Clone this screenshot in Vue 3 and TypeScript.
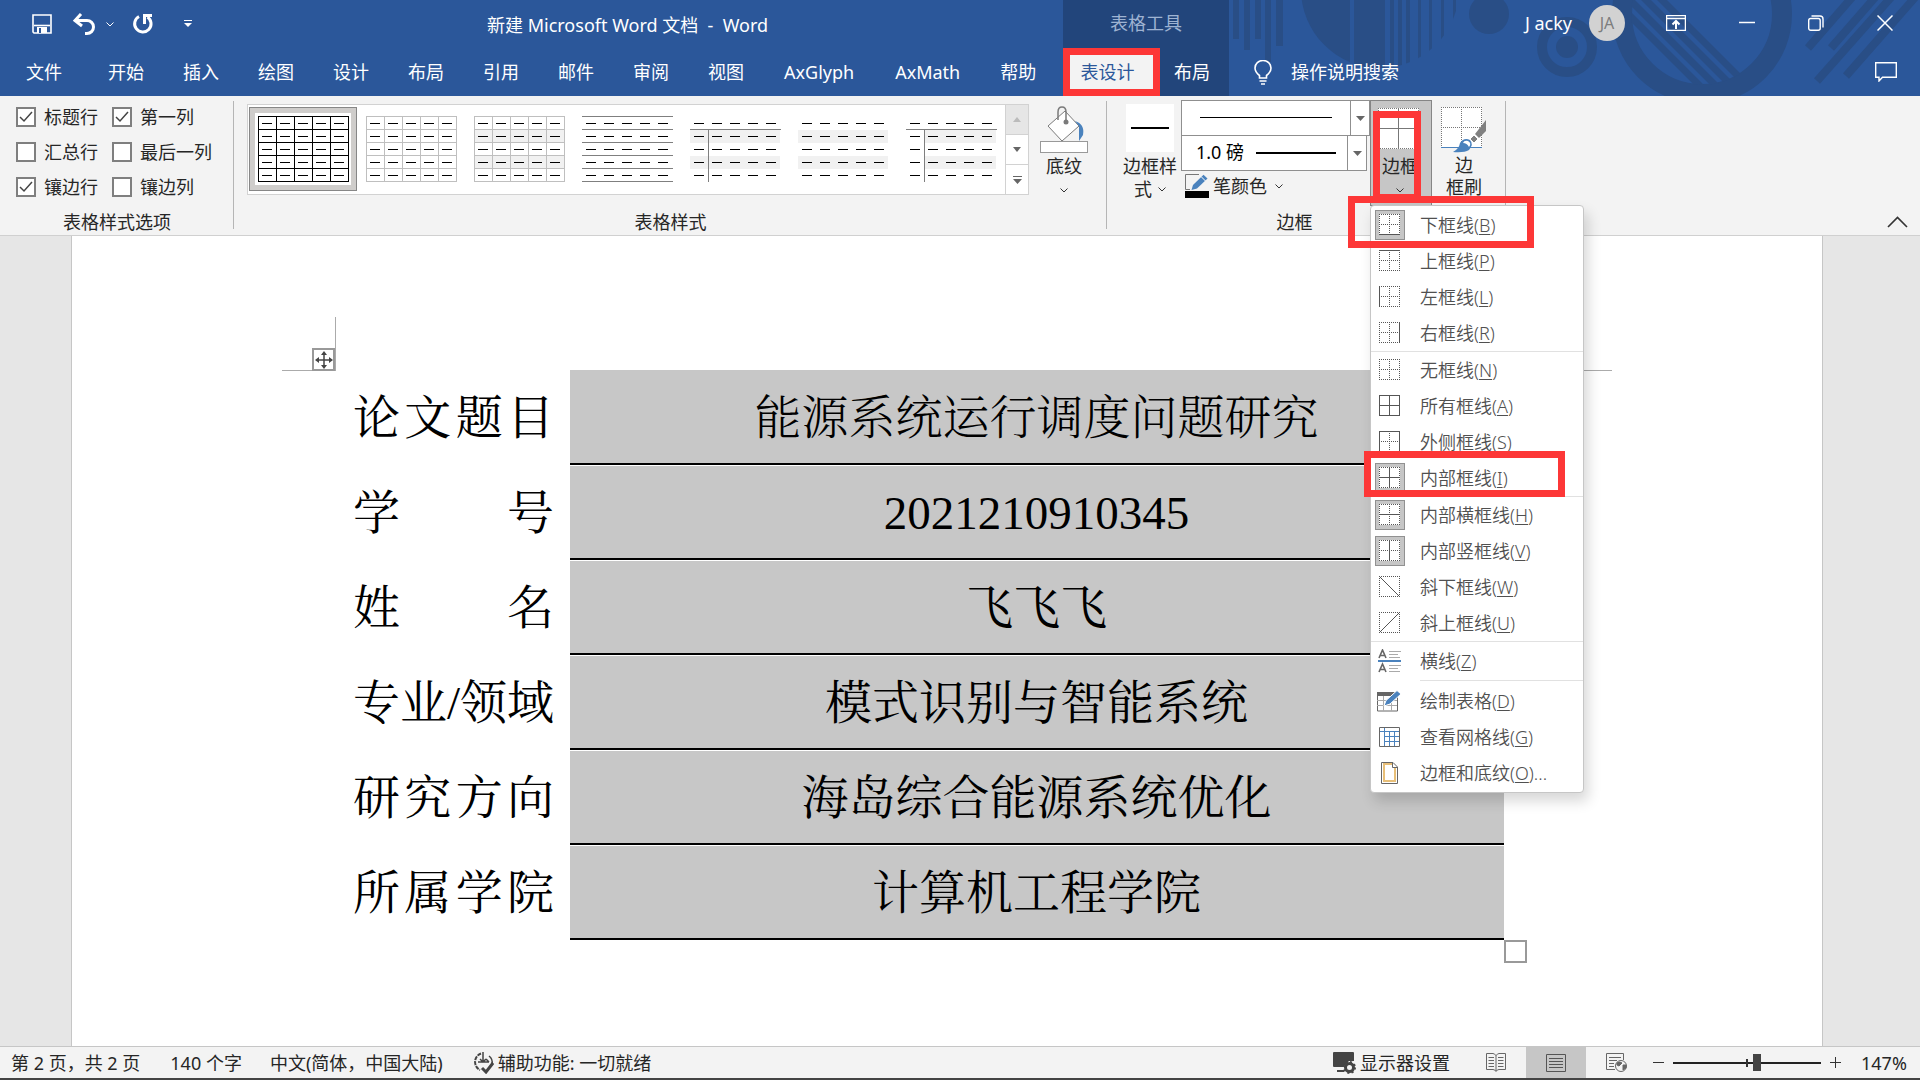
<script setup lang="ts">
import { ref } from 'vue'

interface MenuItem {
  label: string
  key: string
  tail?: string
  solid?: string
  outline?: boolean
  icon?: 'rule' | 'draw' | 'grid' | 'page'
  on?: boolean
  mark?: string
}

const tabs = ['文件', '开始', '插入', '绘图', '设计', '布局', '引用', '邮件', '审阅', '视图', 'AxGlyph', 'AxMath', '帮助']

const options = ref([
  { label: '标题行', checked: true },
  { label: '第一列', checked: true },
  { label: '汇总行', checked: false },
  { label: '最后一列', checked: false },
  { label: '镶边行', checked: true },
  { label: '镶边列', checked: false },
])

const styles = [
  { name: '网格型', stroke: '#000', rows: [0, 1, 2, 3, 4, 5], cols: [0, 1, 2, 3, 4, 5], band: 0 },
  { name: '网格型浅色', stroke: '#bfbfbf', rows: [0, 1, 2, 3, 4, 5], cols: [0, 1, 2, 3, 4, 5], band: 0 },
  { name: '普通表格 1', stroke: '#bfbfbf', rows: [0, 1, 2, 3, 4, 5], cols: [0, 1, 2, 3, 4, 5], band: 90 },
  { name: '普通表格 2', stroke: '#7f7f7f', rows: [0, 1, 2, 3, 4, 5], cols: [], band: 0 },
  { name: '普通表格 3', stroke: '#7f7f7f', rows: [1], cols: [1], band: 90 },
  { name: '普通表格 4', stroke: '#7f7f7f', rows: [], cols: [], band: 90 },
  { name: '普通表格 5', stroke: '#7f7f7f', rows: [1], cols: [1], band: 72 },
]

const sections: MenuItem[][] = [
  [
    { label: '下框线', key: 'B', solid: 'b', on: true, mark: 'mark-first' },
    { label: '上框线', key: 'P', solid: 't' },
    { label: '左框线', key: 'L', solid: 'l' },
    { label: '右框线', key: 'R', solid: 'r' },
  ],
  [
    { label: '无框线', key: 'N', solid: '' },
    { label: '所有框线', key: 'A', solid: 'tblrhv' },
    { label: '外侧框线', key: 'S', solid: 'tblr' },
    { label: '内部框线', key: 'I', solid: 'hv', on: true, mark: 'mark-inner' },
  ],
  [
    { label: '内部横框线', key: 'H', solid: 'h', on: true },
    { label: '内部竖框线', key: 'V', solid: 'v', on: true },
    { label: '斜下框线', key: 'W', solid: 'd', outline: true },
    { label: '斜上框线', key: 'U', solid: 'u', outline: true },
  ],
  [{ label: '横线', key: 'Z', icon: 'rule' }],
  [
    { label: '绘制表格', key: 'D', icon: 'draw' },
    { label: '查看网格线', key: 'G', icon: 'grid' },
    { label: '边框和底纹', key: 'O', tail: '...', icon: 'page' },
  ],
]

const edges: Record<string, string> = {
  t: 'M0 .5H21',
  b: 'M0 20.5H21',
  l: 'M.5 0V21',
  r: 'M20.5 0V21',
  h: 'M0 10.5H21',
  v: 'M10.5 0V21',
  d: 'M1 1L20 20',
  u: 'M1 20L20 1',
}

function dotted(item: MenuItem): string {
  const all = item.outline ? 'tblr' : 'tblrhv'
  return [...all].filter((e) => !item.solid?.includes(e)).map((e) => edges[e]).join('')
}
function solid(item: MenuItem): string {
  return [...(item.solid ?? '')].map((e) => edges[e]).join('')
}

const rows = [
  ['论文题目', '能源系统运行调度问题研究'],
  ['学号', '2021210910345'],
  ['姓名', '飞飞飞'],
  ['专业/领域', '模式识别与智能系统'],
  ['研究方向', '海岛综合能源系统优化'],
  ['所属学院', '计算机工程学院'],
]

const zoom = ref(57)
</script>

<template>
  <div class="app">
    <header class="header">
      <svg class="decor" width="691" height="96" viewBox="1229 0 691 96" aria-hidden="true">
        <defs>
          <clipPath id="disc"><circle cx="1380" cy="-11" r="79" /></clipPath>
          <clipPath id="hole"><circle cx="1702" cy="14" r="71" /></clipPath>
        </defs>
        <g fill="#294e86">
          <path d="M1233 0h6v39h-6zM1244 0h6v50h-6zM1255 0h6v39h-6zM1265 0h6v62h-6zM1276 0h7v46h-7z" />
          <path clip-path="url(#disc)" d="M1300 0h50v70h-18V52h-30zM1354 0h31v70h-31zM1390 0h4v70h-4zM1398 0h4v70h-4zM1406 0h4v70h-4zM1418 0h3v70h-3zM1429 0h3v70h-3zM1441 0h3v70h-3zM1453 0h3v70h-3z" />
          <circle cx="1489" cy="14" r="20" />
        </g>
        <g fill="none" stroke="#294e86">
          <circle cx="1567" cy="47" r="25" stroke-width="10" />
          <circle cx="1702" cy="14" r="80" stroke-width="20" />
          <path clip-path="url(#hole)" stroke-width="7" d="M1600 -14L1720 106M1616 -14L1736 106M1632 -14L1752 106M1648 -14L1768 106" />
          <path stroke-width="8" d="M1808 48L1855 -6M1831 48L1878 -6M1817 81L1894 -6M1846 76L1918 -6" />
        </g>
        <circle cx="1567" cy="47" r="11" fill="#294e86" />
      </svg>

      <div class="titlebar">
        <div class="quick">
          <button class="bare" aria-label="保存">
            <svg width="20" height="20" viewBox="0 0 20 20"><path d="M1 1H19V19H2L1 18Z" fill="none" stroke="#fff" stroke-width="1.600" /><path d="M2 11.500H18" stroke="#fff" stroke-width="1.600" /><path d="M5 13H15V19H5Z" fill="#fff" /><path d="M7 14H9V19H7Z" fill="#2b579a" /></svg>
          </button>
          <button class="bare undo" aria-label="撤消">
            <svg width="24" height="22" viewBox="0 0 24 22"><path d="M9 1L3 7.500L10 13M3 7.500H15A6.500 6.500 0 0 1 15 20.500H13" fill="none" stroke="#fff" stroke-width="3" /></svg>
          </button>
          <button class="bare" aria-label="撤消列表">
            <svg width="8" height="5" viewBox="0 0 8 5"><path d="M.5 .5L4 4L7.500 .5" fill="none" stroke="#fff" /></svg>
          </button>
          <button class="bare redo" aria-label="重复">
            <svg width="22" height="22" viewBox="0 0 22 22"><path d="M7 3.500A8.200 8.200 0 1 0 15.500 4" fill="none" stroke="#fff" stroke-width="3" /><path d="M11 1H20V4H14V11H11Z" fill="#fff" /></svg>
          </button>
          <button class="bare more" aria-label="自定义快速访问工具栏">
            <svg width="8" height="8" viewBox="0 0 8 8"><path d="M0 0H8V1H0ZM0 3H8L4 7Z" fill="#fff" /></svg>
          </button>
        </div>
        <h1 class="title">新建 Microsoft Word 文档&nbsp; -&nbsp; Word</h1>
        <div class="tools-title">表格工具</div>
        <div class="account">
          <span>J acky</span>
          <span class="avatar">JA</span>
          <button class="bare" aria-label="功能区显示选项">
            <svg width="20" height="16" viewBox="0 0 20 16"><path d="M.5 .5H19.500V15.500H.5ZM0 3.500H20" fill="none" stroke="#fff" stroke-width="1.500" /><path d="M10 14V6M6.500 9.500L10 6L13.500 9.500" fill="none" stroke="#fff" stroke-width="2" /></svg>
          </button>
          <button class="bare" aria-label="最小化">
            <svg width="16" height="16" viewBox="0 0 16 16"><path d="M0 7.500H16" stroke="#fff" stroke-width="1.500" /></svg>
          </button>
          <button class="bare" aria-label="还原">
            <svg width="16" height="16" viewBox="0 0 16 16"><rect x=".7" y="3.500" width="11.500" height="11.800" rx="2" fill="none" stroke="#fff" stroke-width="1.400" /><path d="M3.500 1H12Q15 1 15 4V12.500" fill="none" stroke="#fff" stroke-width="1.400" /></svg>
          </button>
          <button class="bare" aria-label="关闭">
            <svg width="16" height="16" viewBox="0 0 16 16"><path d="M.5 .5L15.500 15.500M15.500 .5L.5 15.500" stroke="#fff" stroke-width="1.500" /></svg>
          </button>
        </div>
      </div>

      <nav class="tabs">
        <div class="main-tabs">
          <button v-for="t in tabs" :key="t" class="tab" :class="{ addin: t.startsWith('Ax') }">{{ t }}</button>
        </div>
        <div class="tool-tabs">
          <button class="tab tab-active">表设计</button>
          <button class="tab tab-tool">布局</button>
        </div>
        <button class="tab tell">
          <svg width="18" height="25" viewBox="0 0 18 25"><path d="M5.500 18V15.500Q1 12 1 8A8 7.500 0 0 1 17 8Q17 12 12.500 15.500V18ZM5.500 21H12.500M7 24H11" fill="none" stroke="#fff" stroke-width="1.600" /></svg>
          操作说明搜索
        </button>
        <button class="bare comment" aria-label="批注">
          <svg width="22" height="20" viewBox="0 0 22 20"><path d="M.7 .7H21.300V15.300H7.500L4 19V15.300H.7Z" fill="none" stroke="#fff" stroke-width="1.400" /></svg>
        </button>
      </nav>
    </header>

    <section class="ribbon">
      <div class="group group-options">
        <div class="body checks">
          <label v-for="o in options" :key="o.label" class="check"><input v-model="o.checked" type="checkbox" />{{ o.label }}</label>
        </div>
        <div class="caption">表格样式选项</div>
      </div>

      <div class="group group-styles">
        <div class="body">
          <div class="gallery">
            <button v-for="(s, i) in styles" :key="s.name" class="style" :class="{ chosen: i === 0 }" :aria-label="s.name">
              <svg width="91" height="66" viewBox="0 0 91 66" shape-rendering="crispEdges">
                <path v-if="s.band" :d="`M${90 - s.band} 13.500H90V26.500H${90 - s.band}ZM${90 - s.band} 39.500H90V52.500H${90 - s.band}Z`" fill="#f1f1f1" />
                <path v-for="r in s.rows" :key="'r' + r" :d="`M0 ${r * 13 + 0.5}H91`" :stroke="s.stroke" />
                <path v-for="c in s.cols" :key="'c' + c" :d="`M${c * 18 + 0.5} ${s.cols.length === 1 ? 13 : 0}V66`" :stroke="s.stroke" />
                <path d="M4 7.500H90M4 20.500H90M4 33.500H90M4 46.500H90M4 59.500H90" stroke="#000" stroke-dasharray="10 8" />
              </svg>
            </button>
            <div class="scroller">
              <button class="scroll dim" aria-label="上一行"><svg width="8" height="5"><path d="M0 5H8L4 0Z" fill="#bbb" /></svg></button>
              <button class="scroll" aria-label="下一行"><svg width="8" height="5"><path d="M0 0H8L4 5Z" fill="#666" /></svg></button>
              <button class="scroll" aria-label="其他"><svg width="9" height="8"><path d="M0 0H9V1H0ZM0 3H9L4.500 8Z" fill="#666" /></svg></button>
            </div>
          </div>
          <button class="big shading">
            <svg width="48" height="48" viewBox="0 0 48 48"><path d="M25 5L39 20L22 35L8 20Z" fill="#fff" stroke="#7a7a7a" /><path d="M18 14V6Q18 1 22 1Q26 1 26 6V16" fill="none" stroke="#7a7a7a" stroke-width="1.500" /><circle cx="26" cy="16" r="2.500" fill="#7a7a7a" /><path d="M35 15Q45 18 43 29L39 35V20Z" fill="#4a82bd" /><rect x=".5" y="35.500" width="47" height="11" fill="#fff" stroke="#999" /></svg>
            <span>底纹</span>
            <svg class="chev" width="8" height="5" viewBox="0 0 8 5"><path d="M.5 .5L4 4L7.500 .5" /></svg>
          </button>
        </div>
        <div class="caption">表格样式</div>
      </div>

      <div class="group group-borders">
        <div class="body">
          <button class="big border-style">
            <svg width="48" height="48"><path d="M0 0H48V48H0Z" fill="#fff" /><path d="M5 24H43" stroke="#000" stroke-width="2" /></svg>
            <span>边框样</span>
            <span class="second">式 <svg class="chev" width="8" height="5" viewBox="0 0 8 5"><path d="M.5 .5L4 4L7.500 .5" /></svg></span>
          </button>
          <div class="pen">
            <div class="combo">
              <select aria-label="笔样式"><option></option></select>
              <svg class="stroke thin" width="132" height="1"><path d="M0 .5H132" stroke="#000" /></svg>
              <span class="drop"><svg width="9" height="5"><path d="M0 0H9L4.500 5Z" fill="#666" /></svg></span>
            </div>
            <div class="combo weight">
              <select aria-label="笔划粗细"><option>1.0 磅</option></select>
              <svg class="stroke" width="80" height="2"><path d="M0 1H80" stroke="#000" stroke-width="2" /></svg>
              <span class="drop"><svg width="9" height="5"><path d="M0 0H9L4.500 5Z" fill="#666" /></svg></span>
            </div>
            <button class="pen-color">
              <svg width="24" height="24" viewBox="0 0 24 24"><path d="M14 .5H.5V15.500H5" fill="none" stroke="#777" /><path d="M6.500 16L8 11L18.500 .8L22.500 4.500L12 14.500Z" fill="#4a82bd" /><path d="M16 2.500L20.500 7" stroke="#fff" /><path d="M0 17H24V24H0Z" /></svg>
              笔颜色
              <svg class="chev" width="8" height="5" viewBox="0 0 8 5"><path d="M.5 .5L4 4L7.500 .5" /></svg>
            </button>
          </div>
          <div class="borders">
            <button class="big borders-button">
              <svg width="41" height="41" viewBox="0 0 41 41" shape-rendering="crispEdges"><path d="M0 0H41V41H0Z" fill="#fff" /><path d="M0 .5H41M0 40.500H41M.5 0V41M40.500 0V41" stroke="#777" stroke-dasharray="1 1" /><path d="M0 20.500H41M20.500 0V41" stroke="#777" /></svg>
              <span>边框</span>
              <svg class="chev" width="8" height="5" viewBox="0 0 8 5"><path d="M.5 .5L4 4L7.500 .5" /></svg>
            </button>
            <i class="mark mark-borders"></i>
            <div class="menu" role="menu">
              <div v-for="(section, i) in sections" :key="i" class="section" :class="'section-' + i">
                <button v-for="item in section" :key="item.key" class="item" role="menuitem">
                  <span class="glyph" :class="{ on: item.on }">
                    <svg v-if="!item.icon" width="21" height="21" viewBox="0 0 21 21" fill="none">
                      <path d="M0 0H21V21H0Z" fill="#fff" />
                      <path :d="dotted(item)" stroke="#555" stroke-dasharray="1 1" shape-rendering="crispEdges" />
                      <path :d="solid(item)" stroke="#555" />
                    </svg>
                    <svg v-else-if="item.icon === 'rule'" width="23" height="24" viewBox="0 0 23 24" fill="none">
                      <path d="M1 9L4.500 1L8 9M2.500 6.500H6.500M1 23L4.500 15L8 23M2.500 20.500H6.500" stroke="#666" stroke-width="1.600" />
                      <path d="M11 2.500H23M11 5.500H20M11 8.500H22M11 16.500H23M11 19.500H20M11 22.500H22" stroke="#aaa" />
                      <path d="M0 12H23" stroke="#4a82bd" stroke-width="2" />
                    </svg>
                    <svg v-else-if="item.icon === 'draw'" width="25" height="23" viewBox="0 0 25 23" fill="none">
                      <path d="M.5 3.500H20.500V22H.5Z" stroke="#666" fill="#fff" /><path d="M0 3H18L15 7H0Z" fill="#666" />
                      <path d="M0 11.500H20M0 16.500H20M6.500 7V22M14.500 7V22" stroke="#aaa" />
                      <path d="M7 17L9 11.500L20 1.500L24 5L13 15Z" fill="#4a82bd" stroke="#fff" />
                    </svg>
                    <svg v-else-if="item.icon === 'grid'" width="21" height="20" viewBox="0 0 21 20" fill="none">
                      <path d="M1 4.500H20M5 9.500H20M5 14.500H20M5.500 1V19M10.500 4V19M15.500 4V19" stroke="#4a82bd" />
                      <path d="M.5 .5H20.500V19.500H.5Z" stroke="#666" />
                    </svg>
                    <svg v-else width="17" height="22" viewBox="0 0 17 22" fill="none">
                      <path d="M.5 .5H12L16.500 5V21.500H.5Z" stroke="#666" /><path d="M12 2H3V19H14V6" stroke="#e8bf78" stroke-width="2" /><path d="M11.500 .5V5.500H16.500" stroke="#666" />
                    </svg>
                  </span>
                  <span>{{ item.label }}(<u>{{ item.key }}</u>){{ item.tail }}</span>
                  <i v-if="item.mark" class="mark" :class="item.mark"></i>
                </button>
              </div>
            </div>
          </div>
          <button class="big painter">
            <svg width="46" height="46" viewBox="0 0 46 46"><path d="M0 0H41V41H0Z" fill="#fff" /><path d="M0 .5H41M0 20.500H41M.5 0V40M20.500 0V40M40.500 0V40" stroke="#777" stroke-dasharray="1 1" shape-rendering="crispEdges" /><path d="M0 40.500H41" stroke="#4a82bd" /><path d="M45 13V24L38 31L34 27Z" fill="#808080" /><path d="M33 28L37 32L33 36L29 32Z" fill="#808080" stroke="#fff" /><path d="M12 45Q18 42 19 36Q23 30 29 33Q33 37 28 43Q23 46 12 45Z" fill="#4a82bd" /><path d="M22 36Q23 33 27 34Q31 36 28 40Q26 36 22 36Z" fill="#fff" /></svg>
            <span>边</span>
            <span class="second">框刷</span>
          </button>
        </div>
        <div class="caption">边框</div>
      </div>
      <button class="bare collapse" aria-label="折叠功能区">
        <svg width="21" height="12" viewBox="0 0 21 12"><path d="M1 11L10.500 1.500L20 11" fill="none" stroke="#333" stroke-width="1.600" /></svg>
      </button>
    </section>

    <main class="workspace">
      <article class="page">
        <div class="crop">
          <button class="handle" aria-label="移动表格">
            <svg width="18" height="18" viewBox="0 0 18 18"><path d="M9 2V16M2 9H16" stroke="#444" stroke-width="1.500" /><path d="M9 0L12 4H6ZM9 18L12 14H6ZM0 9L4 6V12ZM18 9L14 6V12Z" fill="#444" /></svg>
          </button>
          <span class="crop-right"></span>
        </div>
        <div class="sheet">
          <table>
            <tbody>
              <tr v-for="r in rows" :key="r[0]">
                <th scope="row">{{ r[0] }}</th>
                <td>{{ r[1] }}</td>
              </tr>
            </tbody>
          </table>
          <i class="resize"></i>
        </div>
      </article>
    </main>

    <footer class="status">
      <span class="pages">第 2 页，共 2 页</span>
      <span class="words">140 个字</span>
      <span class="lang">中文(简体，中国大陆)</span>
      <button class="bare access">
        <svg width="21" height="22" viewBox="0 0 21 22" fill="none" stroke="#444"><path d="M8 1.500A9 9 0 0 0 7 18" stroke-width="2" stroke-dasharray="4 1" /><path d="M10 0V10M7 7L10 10L13 7M5 10H16M13 7L16 10" stroke-width="1.500" /><path d="M16 4Q20 7 19 12" stroke-width="1.500" /><path d="M9 16L13 20L20 11" stroke-width="3" /></svg>
        辅助功能: 一切就绪
      </button>
      <button class="bare display">
        <svg width="23" height="22" viewBox="0 0 23 22"><path d="M1 0H20Q21 0 21 1V9H16L10 15H1Q0 15 0 14V1Q0 0 1 0ZM4 18H11V20H4Z" fill="#444" /><circle cx="16.500" cy="15.500" r="4" fill="none" stroke="#444" stroke-width="3" /><circle cx="16.500" cy="15.500" r="5.500" fill="none" stroke="#444" stroke-width="2" stroke-dasharray="2 2.300" /></svg>
        显示器设置
      </button>
      <button class="view" aria-label="阅读视图">
        <svg width="20" height="19" viewBox="0 0 20 19" fill="none" stroke="#666"><path d="M10 2.500Q8 .5 7 .5H.5V16.500H7Q9 16.500 10 18.500Q11 16.500 13 16.500H19.500V.5H13Q12 .5 10 2.500V18" /><path d="M2.500 4.500H8M2.500 7.500H8M2.500 10.500H8M2.500 13.500H8M12 4.500H17.500M12 7.500H17.500M12 10.500H17.500M12 13.500H17.500" /></svg>
      </button>
      <button class="view view-on" aria-label="页面视图">
        <svg width="20" height="18" viewBox="0 0 20 18" fill="none" stroke="#555"><path d="M.5 .5H19.500V17.500H.5ZM3 4.500H17M3 7.500H17M3 10.500H17M3 13.500H17" /></svg>
      </button>
      <button class="view" aria-label="Web 版式视图">
        <svg width="21" height="19" viewBox="0 0 21 19" fill="none" stroke="#666"><path d="M9 16.500H.5V.5H17.500V7M3 4.500H15M3 7.500H11M3 10.500H8M3 13.500H8" /><circle cx="15" cy="13" r="5.500" fill="#f3f3f3" /><path d="M11 10Q14 8 16 10L13 13L11 12ZM17 12H20V15L17 17Z" fill="#666" /></svg>
      </button>
      <button class="bare minus" aria-label="缩小"><svg width="11" height="11"><path d="M0 5.500H11" stroke="#333" /></svg></button>
      <input v-model="zoom" class="zoom" type="range" min="0" max="100" aria-label="显示比例" />
      <button class="bare plus" aria-label="放大"><svg width="11" height="11"><path d="M0 5.500H11M5.500 0V11" stroke="#333" /></svg></button>
      <span class="percent">147%</span>
    </footer>
  </div>
</template>

<style>
body {
  margin: 0;
}
</style>

<style scoped>
.app {
  display: flex;
  flex-direction: column;
  min-height: 100vh;
  box-sizing: border-box;
  border-bottom: 2px solid #444;
  font: 18px/24px "Noto Sans", "Noto Sans CJK SC", sans-serif;
  color: #262626;
  background: #e6e6e6;
}
* {
  box-sizing: border-box;
}
button,
select {
  font: inherit;
  color: inherit;
  padding: 0;
  border: 0;
  background: none;
  white-space: nowrap;
}
svg {
  display: block;
  flex: none;
}
.bare {
  display: flex;
  align-items: center;
}
.chev {
  fill: none;
  stroke: #333;
}

/* Title bar and tabs */
.header {
  position: relative;
  background: #2b579a;
  color: #fff;
}
.decor {
  position: absolute;
  top: 0;
  right: 0;
}
.titlebar,
.tabs {
  position: relative;
  display: flex;
  height: 48px;
}
.quick {
  display: flex;
  align-items: center;
  width: 487px;
  padding-left: 32px;
}
.undo {
  margin: 0 10px 0 20px;
}
.redo {
  margin: 0 30px 0 18px;
}
.title {
  width: 576px;
  margin: 0;
  font-size: 18px;
  font-weight: 400;
  line-height: 50px;
  white-space: nowrap;
}
.tools-title {
  width: 166px;
  background: #22457b;
  color: #9eb3d2;
  line-height: 46px;
  text-align: center;
}
.account {
  display: flex;
  align-items: center;
  height: 46px;
  margin-left: auto;
  padding-right: 27px;
  gap: 53px;
}
.avatar {
  width: 36px;
  height: 36px;
  margin: 0 -12px 0 -36px;
  border-radius: 50%;
  background: #d2d2d2;
  color: #7d7d7d;
  font-size: 16px;
  line-height: 36px;
  text-align: center;
}
.tabs {
  align-items: stretch;
}
.main-tabs {
  display: flex;
  width: 1063px;
  padding-left: 26px;
  gap: 39px;
}
.main-tabs .tab:first-child {
  margin-right: 7px;
}
.main-tabs .addin {
  padding: 0 1px;
}
.tool-tabs {
  display: flex;
  width: 166px;
  background: #22457b;
}
.tab-active {
  width: 97px;
  padding-right: 8px;
  border: 7px solid #fd3737;
  background: #f3f3f3;
  color: #2b579a;
}
.tab-tool {
  padding-left: 14px;
}
.tell {
  display: flex;
  align-items: center;
  gap: 19px;
  padding-left: 25px;
}
.comment {
  margin-left: auto;
  padding-right: 23px;
}

/* Ribbon */
.ribbon {
  display: flex;
  height: 140px;
  border-bottom: 1px solid #d0d0d0;
  background: #f3f3f3;
}
.group {
  position: relative;
}
.group::after {
  content: "";
  position: absolute;
  top: 5px;
  right: 0;
  width: 1px;
  height: 128px;
  background: #b5b5b5;
}
.body {
  display: flex;
  height: 114px;
}
.caption {
  text-align: center;
}
.group-options {
  width: 234px;
}
.group-borders .caption {
  padding-right: 24px;
}
.checks {
  display: grid;
  grid-template-columns: 96px auto;
  grid-auto-rows: 35px;
  padding: 3px 0 0 16px;
}
.check {
  display: flex;
  align-items: center;
  gap: 8px;
  white-space: nowrap;
}
.check input {
  appearance: none;
  width: 20px;
  height: 20px;
  margin: 0;
  border: 2px solid #7f7f7f;
  background: #fff;
}
.check input:checked {
  background: #fff url("data:image/svg+xml,%3Csvg xmlns='http://www.w3.org/2000/svg' viewBox='0 0 16 16'%3E%3Cpath d='M2 8L6 12L14 3' fill='none' stroke='%23444' stroke-width='1.500'/%3E%3C/svg%3E");
}
.group-styles {
  width: 873px;
}
.gallery {
  display: flex;
  height: 91px;
  margin: 8px 0 0 13px;
  border: 1px solid #d2d2d2;
  background: #fff;
}
.style {
  display: flex;
  align-items: center;
  justify-content: center;
  width: 108px;
  height: 84px;
  margin: 2px 0 0 1px;
}
.style + .style {
  margin-left: 0;
}
.chosen {
  border: 1px solid #878787;
  background: #fff;
  box-shadow: inset 0 0 0 5px #cfcdcb;
}
.scroller {
  display: flex;
  flex-direction: column;
  width: 23px;
  border-left: 1px solid #d2d2d2;
}
.scroll {
  display: flex;
  flex: 1;
  align-items: center;
  justify-content: center;
}
.scroll + .scroll {
  border-top: 1px solid #d2d2d2;
}
.dim {
  background: #e6e6e6;
}
.big {
  display: flex;
  flex-direction: column;
  align-items: center;
}
.big > span {
  line-height: 24px;
}
.shading {
  width: 50px;
  margin: 10px 0 0 10px;
}
.big > .chev {
  margin-top: 10px;
}
.group-borders {
  width: 399px;
}
.border-style {
  width: 56px;
  margin: 8px 0 0 15px;
}
.border-style > span {
  margin-top: 2px;
}
.big > .second {
  display: flex;
  align-items: center;
  gap: 6px;
  margin-top: -1px;
}
.pen {
  width: 189px;
  margin: 4px 0 0 3px;
}
.combo {
  position: relative;
  display: flex;
  height: 36px;
  border: 1px solid #8f8f8f;
  background: #fff;
}
.weight {
  width: 186px;
  margin-top: -1px;
}
.combo select {
  appearance: none;
  flex: 1;
  padding: 0 0 2px 14px;
  color: #000;
}
.drop {
  display: flex;
  align-items: center;
  justify-content: center;
  width: 19px;
  border-left: 1px solid #8f8f8f;
}
.stroke {
  position: absolute;
  top: 16px;
  right: 30px;
}
.thin {
  right: 37px;
}
.pen-color {
  display: flex;
  align-items: center;
  height: 30px;
  padding-left: 4px;
  gap: 4px;
}
.pen-color .chev {
  margin-left: 4px;
}
.borders {
  position: relative;
}
.borders-button {
  width: 62px;
  height: 106px;
  margin-top: 4px;
  padding: 7px 6px 0 0;
  border: 1px solid #858585;
  background: #c6c6c6;
}
.borders-button span {
  margin: 5px 0 0 4px;
}
.borders-button .chev {
  margin-left: 4px;
}
.painter {
  width: 46px;
  margin: 11px 0 0 10px;
  padding-right: 2px;
}
.painter .second {
  margin-top: -2px;
}
.collapse {
  align-self: flex-end;
  margin: 0 12px 7px auto;
}

/* Red call-outs */
.mark {
  position: absolute;
  border: 7px solid #fd3737;
  pointer-events: none;
}
.mark-borders {
  top: 15px;
  left: 3px;
  width: 48px;
  height: 90px;
}
.mark-first {
  top: -11px;
  left: -23px;
  width: 186px;
  height: 52px;
}
.mark-inner {
  top: -9px;
  left: -7px;
  width: 201px;
  height: 46px;
}

/* Borders menu */
.menu {
  position: absolute;
  z-index: 2;
  top: 109px;
  left: 0;
  width: 214px;
  padding: 1px 0;
  border: 1px solid #c6c6c6;
  border-radius: 4px;
  background: #fff;
  box-shadow: 4px 8px 14px rgba(0, 0, 0, 0.16);
  color: #505050;
  font-weight: 350;
}
.section + .section {
  border-top: 1px solid #e1e1e1;
}
.section-3 {
  padding: 1px 0;
}
.section.section-4 {
  margin-left: 49px;
  padding-top: 2px;
}
.section-4 .item {
  width: 212px;
  margin-left: -49px;
}
.item {
  position: relative;
  display: flex;
  align-items: center;
  width: 100%;
  height: 36px;
  padding-left: 4px;
  gap: 15px;
}
.item u {
  text-underline-offset: 2px;
  text-decoration-thickness: 1px;
}
.glyph {
  display: flex;
  align-items: center;
  justify-content: center;
  width: 30px;
  height: 30px;
  padding: 0 1px 1px 0;
}
.on {
  border: 1px solid #919191;
  background: #c6c6c6;
}

/* Document */
.workspace {
  display: flex;
  flex: 1;
  padding: 0 97px 0 71px;
}
.page {
  flex: 1;
  padding: 82px 262px 0;
  border: solid #c6c6c6;
  border-width: 0 1px;
  background: #fff;
}
.crop {
  position: relative;
  display: flex;
  align-items: flex-end;
  justify-content: space-between;
  height: 53px;
  margin: 0 -52px;
}
.crop::before {
  content: "";
  width: 53px;
  height: 53px;
  border: solid #ababab;
  border-width: 0 1px 1px 0;
}
.handle {
  position: absolute;
  left: 30px;
  bottom: 0;
  display: flex;
  align-items: center;
  justify-content: center;
  width: 23px;
  height: 23px;
  border: 2px solid #999;
  background: #fff;
}
.crop-right {
  width: 53px;
  border-bottom: 1px solid #ababab;
}
.sheet {
  position: relative;
  margin: -1px 56px 0 4px;
}
table {
  width: 100%;
  border-spacing: 0;
  font: 47px/60px "Liberation Serif", "Noto Serif CJK SC", "Noto Sans CJK SC", serif;
  color: #000;
}
th,
td {
  height: 95px;
  padding: 1px 16px 0 15px;
  font-weight: 400;
  white-space: nowrap;
}
th {
  width: 232px;
  text-align-last: justify;
}
td {
  border-top: 1px solid #fff;
  border-bottom: 2px solid #000;
  background: #c7c7c7;
  text-align: center;
}
tr:first-child td {
  border-top-color: #c7c7c7;
  font-weight: 300;
}
.resize {
  position: absolute;
  top: 100%;
  left: 100%;
  width: 23px;
  height: 23px;
  border: 2px solid #999;
  background: #fff;
}

/* Status bar */
.status {
  display: flex;
  align-items: center;
  height: 32px;
  padding: 0 12px 0 11px;
  border-top: 1px solid #c6c6c6;
  background: #f3f3f3;
  white-space: nowrap;
}
.words {
  margin: 0 28px 0 30px;
}
.access {
  margin-left: 30px;
  gap: 4px;
}
.display {
  margin: 0 16px 0 auto;
  gap: 4px;
}
.view {
  display: flex;
  align-items: center;
  justify-content: center;
  width: 60px;
  height: 31px;
}
.view-on {
  background: #c6c6c6;
}
.minus {
  margin-left: 7px;
}
.zoom {
  appearance: none;
  width: 148px;
  height: 18px;
  margin: 0 9px;
  background: linear-gradient(#333, #333) 73px 50% / 2px 8px no-repeat, linear-gradient(#222, #222) 0 50% / 100% 2px no-repeat;
}
.zoom::-webkit-slider-thumb {
  appearance: none;
  width: 8px;
  height: 17px;
  background: #444;
}
.percent {
  width: 47px;
  margin-left: 20px;
}
</style>
